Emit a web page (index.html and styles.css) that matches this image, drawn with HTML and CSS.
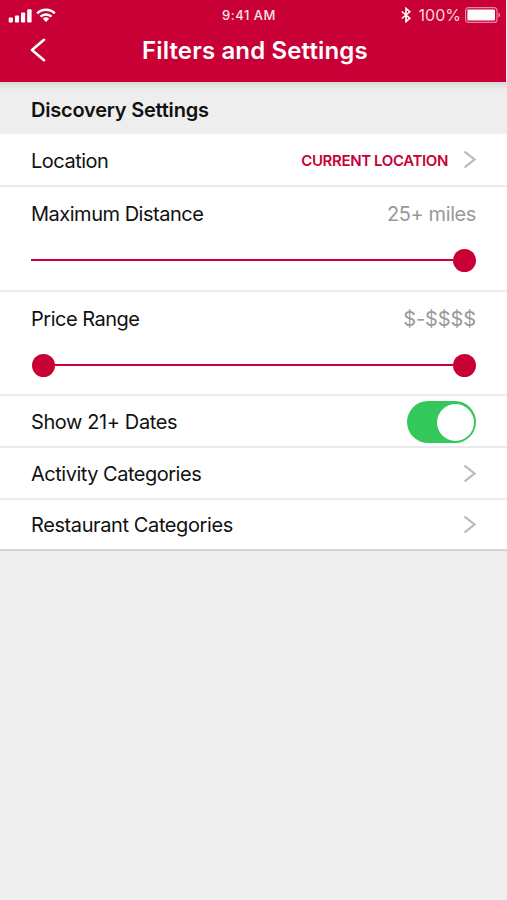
FILE: index.html
```
<!doctype html>
<html lang="en">
<head>
<meta charset="utf-8">
<title>Filters and Settings</title>
<link rel="stylesheet" href="styles.css">
</head>
<body>
	<header class="header">
		<div class="status">
			<div class="status-left">
				<svg class="signal" width="24" height="15" viewBox="0 0 24 15">
					<rect x="0.7" y="9.4" width="4.2" height="5" rx="1"/>
					<rect x="6.9" y="7.4" width="4.2" height="7" rx="1"/>
					<rect x="13" y="4.6" width="4.2" height="9.8" rx="1"/>
					<rect x="19.2" y="1.2" width="4.4" height="13.2" rx="1"/>
				</svg>
				<svg class="wifi" width="20" height="15" viewBox="0 0 20 15">
					<path d="M1.2 5.4a12.6 12.6 0 0 1 17.6 0M4.5 8.7a8 8 0 0 1 11 0" fill="none" stroke="#fff" stroke-width="2.5"/>
					<path d="M6.8 10.8a4.8 4.8 0 0 1 6.4 0L10 14z"/>
				</svg>
			</div>
			<span class="time">9:41 AM</span>
			<div class="status-right">
				<svg class="bluetooth" width="10" height="16" viewBox="0 0 10 16">
					<path d="M0.8 4.5L8.8 11.2L5 14.6V1.4L8.8 4.8L0.8 11.5" fill="none" stroke="#fff" stroke-width="1.6"/>
				</svg>
				<span class="percent">100%</span>
				<svg class="battery" width="36" height="16" viewBox="0 0 36 16">
					<rect x="0.6" y="0.6" width="31.4" height="14.8" rx="3" fill="none" stroke="#f080a0" stroke-width="1.2"/>
					<rect x="2.4" y="2.6" width="27.6" height="10.8" rx="1"/>
					<path d="M33.4 5.6c2.4 1 2.4 4 0 5z" fill="#f080a0"/>
				</svg>
			</div>
		</div>
		<div class="nav">
			<svg class="back" width="16" height="24" viewBox="0 0 16 24">
				<path d="M14 1.8L2 12L14 22.2" fill="none" stroke="#fff" stroke-width="2.6" stroke-linecap="round" stroke-linejoin="round"/>
			</svg>
			<h1 class="title">Filters and Settings</h1>
		</div>
	</header>
	<h2 class="section">Discovery Settings</h2>
	<ul class="list">
		<li class="row row-first">
			<span class="label">Location</span>
			<span class="current">CURRENT LOCATION</span>
			<svg class="arrow" width="12" height="17" viewBox="0 0 12 17"><path d="M1.2 1.2L10.4 8.5L1.2 15.8"/></svg>
		</li>
		<li class="row row-slider">
			<div class="line">
				<span class="label">Maximum Distance</span>
				<span class="value">25+ miles</span>
			</div>
			<div class="slider">
				<div class="track"></div>
				<div class="knob"></div>
			</div>
		</li>
		<li class="row row-slider row-price">
			<div class="line">
				<span class="label">Price Range</span>
				<span class="value price">$-$$$$</span>
			</div>
			<div class="slider">
				<div class="knob knob-min"></div>
				<div class="track"></div>
				<div class="knob"></div>
			</div>
		</li>
		<li class="row">
			<span class="label loose">Show 21+ Dates</span>
			<div class="switch"><div class="switch-knob"></div></div>
		</li>
		<li class="row">
			<span class="label">Activity Categories</span>
			<svg class="arrow" width="12" height="17" viewBox="0 0 12 17"><path d="M1.2 1.2L10.4 8.5L1.2 15.8"/></svg>
		</li>
		<li class="row">
			<span class="label loose">Restaurant Categories</span>
			<svg class="arrow" width="12" height="17" viewBox="0 0 12 17"><path d="M1.2 1.2L10.4 8.5L1.2 15.8"/></svg>
		</li>
	</ul>
</body>
</html>
```
FILE: styles.css
```
*{
	margin:0;
	padding:0;
	box-sizing:border-box;
}
body{
	background:#eee;
	font-family:Inter,"Liberation Sans",sans-serif;
	color:#111;
}
svg{
	display:block;
	fill:#fff;
	flex:none;
}
.header{
	height:82px;
	width:506px;
	background:#c80036;
	color:#fff;
}
.status{
	display:grid;
	grid-template-columns:1fr auto 1fr;
	align-items:center;
	height:30px;
	padding:0 5px 0 8px;
}
.status-left,
.status-right{
	display:flex;
	align-items:center;
}
.status-left{gap:4px;}
.status-right{justify-content:flex-end;}
.time{
	margin-right:11px;
	font-size:13px;
	font-weight:500;
	letter-spacing:0.5px;
	color:#fde3ea;
}
.percent{
	margin:0 4px 0 8px;
	font-size:16px;
	color:#fbd5df;
}
.nav{
	display:flex;
	align-items:center;
	height:40px;
	padding-left:30px;
}
.title{
	margin-left:96px;
	font-size:24px;
	font-weight:600;
	letter-spacing:0.15px;
	white-space:nowrap;
}
.section{
	display:flex;
	align-items:center;
	height:52px;
	padding:4px 31px 0;
	font-size:20px;
	font-weight:600;
	letter-spacing:-0.22px;
	background:linear-gradient(#d6d7d3,#eaebe9 6px,#eee 10px);
}
.list{
	list-style:none;
	background:#fff;
	border-bottom:2px solid #d5d5d5;
}
.row{
	display:flex;
	align-items:center;
	height:52px;
	padding:0 31px;
	border-bottom:2px solid #ebebeb;
}
.row-first{height:53px;}
.row:last-child{
	height:49px;
	border-bottom:0;
}
.row:last-child .label{padding-top:0;}
.row-slider{
	display:block;
	height:105px;
}
.row-price{height:104px;}
.line{
	display:flex;
	align-items:center;
	height:53px;
}
.label{
	margin-right:auto;
	padding-top:2px;
	font-size:20px;
	letter-spacing:-0.49px;
	white-space:nowrap;
}
.loose{letter-spacing:-0.4px;}
.value{
	font-size:20px;
	letter-spacing:-0.4px;
	color:#999;
}
.line .label{padding-top:0;}
.price{letter-spacing:-0.1px;}
.current{
	margin-right:16px;
	padding-top:1px;
	font-size:15px;
	font-weight:600;
	letter-spacing:-0.37px;
	color:#c80036;
}
.arrow path{
	fill:none;
	stroke:#bbb;
	stroke-width:2.2;
	stroke-linecap:round;
}
.slider{
	display:flex;
	align-items:center;
	height:40px;
}
.track{
	flex:1;
	height:2px;
	background:#c80036;
}
.knob{
	width:23px;
	height:23px;
	border-radius:50%;
	background:#c80036;
}
.knob-min{margin-left:1px;}
.switch{
	width:69px;
	height:42px;
	margin-top:2px;
	padding:3px 2px;
	border-radius:21px;
	background:#34c759;
}
.switch-knob{
	width:37px;
	height:37px;
	margin-left:auto;
	border-radius:50%;
	background:#fff;
}
```
